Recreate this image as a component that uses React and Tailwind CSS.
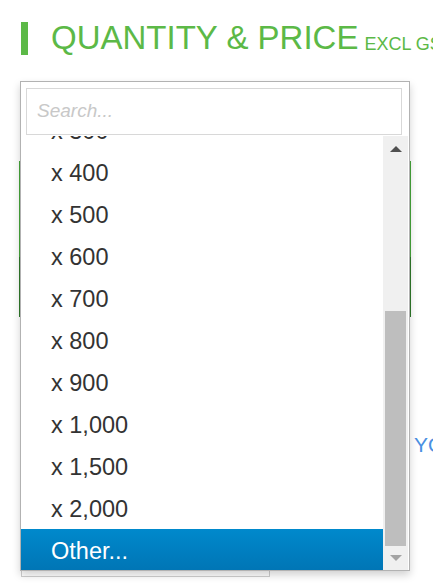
import React from 'react'

const options = ['x 300', 'x 400', 'x 500', 'x 600', 'x 700', 'x 800', 'x 900', 'x 1,000', 'x 1,500', 'x 2,000']

export default function App() {
  return (
    <div className="relative w-[433px] h-[583px] overflow-hidden bg-white font-['Liberation_Sans',Arial,sans-serif]">
      {/* heading */}
      <div className="flex items-end h-[55px] pt-[22px] pl-[21px] whitespace-nowrap">
        <div className="shrink-0 w-[7px] h-[33px] bg-[#5cb947]" />
        <h2 className="shrink-0 ml-[23px] text-[33px] leading-[33px] text-[#5cb947] mb-[1px]">QUANTITY &amp; PRICE</h2>
        <span className="shrink-0 ml-[6px] text-[18px] leading-[18px] text-[#5cb947] mb-[2px]">EXCL GST</span>
      </div>

      {/* page content under the open dropdown */}
      <div className="mt-[106px] ml-[19px] w-[392px]">
        <div className="h-[96px] bg-[#46a63a]" />
        <div className="h-[60px] bg-[#2f7a2a]" />
      </div>
      <div className="mt-[116px] ml-[414px] text-[21px] leading-[24px] text-[#4a90e2] whitespace-nowrap">YOUR</div>
      <div className="mt-[100px] ml-[21px] w-[249px] h-[20px] border border-[#cfcfcf]" />

      {/* open select dropdown */}
      <div className="absolute left-[20px] top-[81px] w-[390px] h-[490px] flex flex-col bg-white border border-[rgba(0,0,0,0.3)] shadow-[0_4px_8px_rgba(0,0,0,0.18)]">
        <div className="pl-[5px] pr-[7px] pt-[6px] pb-[1px]">
          <div className="h-[47px] border border-[#d8d8d8] px-[10px] flex items-center">
            <span className="italic text-[19px] text-[#c8c8c8]">Search...</span>
          </div>
        </div>
        <div className="flex flex-1 min-h-0">
          <div className="flex-1 overflow-hidden">
            <ul className="-mt-[27px]">
              {options.map((o) => (
                <li key={o} className="h-[42px] flex items-center pl-[30px] pt-[3px] text-[23.5px] text-[#333]">
                  {o}
                </li>
              ))}
              <li className="h-[42px] flex items-center pl-[30px] pt-[3px] text-[23.5px] text-white bg-gradient-to-b from-[#0089cc] to-[#0075b5]">
                Other...
              </li>
            </ul>
          </div>
          {/* scrollbar */}
          <div className="w-[25px] mr-[1px] bg-[#f0f0f0] flex flex-col items-center">
            <div className="h-[26px] flex items-center justify-center">
              <div className="w-0 h-0 border-l-[6px] border-r-[6px] border-b-[6px] border-l-transparent border-r-transparent border-b-[#505050]" />
            </div>
            <div className="mt-[149px] w-[21px] h-[235px] bg-[#bebebe]" />
            <div className="flex-1 flex items-center justify-center">
              <div className="w-0 h-0 border-l-[6px] border-r-[6px] border-t-[6px] border-l-transparent border-r-transparent border-t-[#a3a3a3]" />
            </div>
          </div>
        </div>
      </div>
    </div>
  )
}
